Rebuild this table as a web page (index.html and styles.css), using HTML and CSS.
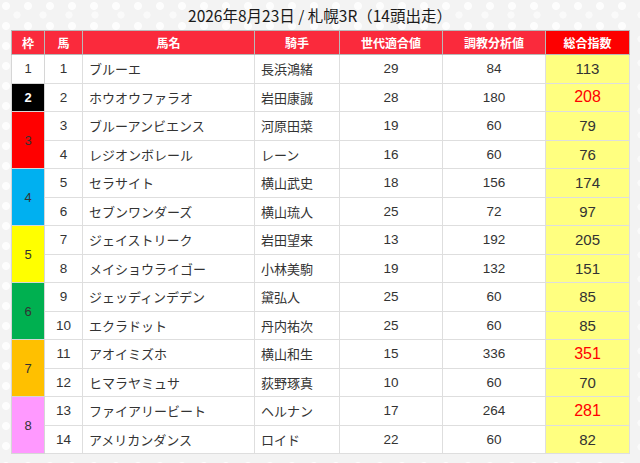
FILE: index.html
```html
<!DOCTYPE html>
<html lang="ja">
<head>
<meta charset="utf-8">
<link rel="stylesheet" href="styles.css">
</head>
<body>
<div class="page">
  <h1 class="title">2026年8月23日 / 札幌3R（14頭出走）</h1>
  <table class="race">
    <colgroup>
      <col class="c-waku"><col class="c-uma"><col class="c-name"><col class="c-jockey"><col class="c-gen"><col class="c-train"><col class="c-total">
    </colgroup>
    <thead>
      <tr><th>枠</th><th>馬</th><th>馬名</th><th>騎手</th><th>世代適合値</th><th>調教分析値</th><th class="th-total">総合指数</th></tr>
    </thead>
    <tbody>
      <tr><td class="waku w1">1</td><td class="num">1</td><td class="txt">ブルーエ</td><td class="txt">長浜鴻緒</td><td class="num">29</td><td class="num">84</td><td class="total">113</td></tr>
      <tr><td class="waku w2">2</td><td class="num">2</td><td class="txt">ホウオウファラオ</td><td class="txt">岩田康誠</td><td class="num">28</td><td class="num">180</td><td class="total hi">208</td></tr>
      <tr><td class="waku w3" rowspan="2">3</td><td class="num">3</td><td class="txt">ブルーアンビエンス</td><td class="txt">河原田菜</td><td class="num">19</td><td class="num">60</td><td class="total">79</td></tr>
      <tr><td class="num">4</td><td class="txt">レジオンボレール</td><td class="txt">レーン</td><td class="num">16</td><td class="num">60</td><td class="total">76</td></tr>
      <tr><td class="waku w4" rowspan="2">4</td><td class="num">5</td><td class="txt">セラサイト</td><td class="txt">横山武史</td><td class="num">18</td><td class="num">156</td><td class="total">174</td></tr>
      <tr><td class="num">6</td><td class="txt">セブンワンダーズ</td><td class="txt">横山琉人</td><td class="num">25</td><td class="num">72</td><td class="total">97</td></tr>
      <tr><td class="waku w5" rowspan="2">5</td><td class="num">7</td><td class="txt">ジェイストリーク</td><td class="txt">岩田望来</td><td class="num">13</td><td class="num">192</td><td class="total">205</td></tr>
      <tr><td class="num">8</td><td class="txt">メイショウライゴー</td><td class="txt">小林美駒</td><td class="num">19</td><td class="num">132</td><td class="total">151</td></tr>
      <tr><td class="waku w6" rowspan="2">6</td><td class="num">9</td><td class="txt">ジェッディンデデン</td><td class="txt">黛弘人</td><td class="num">25</td><td class="num">60</td><td class="total">85</td></tr>
      <tr><td class="num">10</td><td class="txt">エクラドット</td><td class="txt">丹内祐次</td><td class="num">25</td><td class="num">60</td><td class="total">85</td></tr>
      <tr><td class="waku w7" rowspan="2">7</td><td class="num">11</td><td class="txt">アオイミズホ</td><td class="txt">横山和生</td><td class="num">15</td><td class="num">336</td><td class="total hi">351</td></tr>
      <tr><td class="num">12</td><td class="txt">ヒマラヤミュサ</td><td class="txt">荻野琢真</td><td class="num">10</td><td class="num">60</td><td class="total">70</td></tr>
      <tr><td class="waku w8" rowspan="2">8</td><td class="num">13</td><td class="txt">ファイアリービート</td><td class="txt">ヘルナン</td><td class="num">17</td><td class="num">264</td><td class="total hi">281</td></tr>
      <tr><td class="num">14</td><td class="txt">アメリカンダンス</td><td class="txt">ロイド</td><td class="num">22</td><td class="num">60</td><td class="total">82</td></tr>
    </tbody>
  </table>
</div>
</body>
</html>
```
FILE: styles.css
```css
html, body {
  margin: 0;
  padding: 0;
}
body {
  width: 640px;
  height: 463px;
  overflow: hidden;
  background-color: #f3f3f3;
  background-image:
    radial-gradient(circle at 6px 6px, #fdfdfd 3.5px, transparent 4.5px),
    radial-gradient(circle at 17px 15px, #fafafa 3px, transparent 4px);
  background-size: 22px 20px, 26px 24px;
  font-family: "Noto Sans CJK JP", "Noto Sans", sans-serif;
  color: #333;
}
.page {
  padding: 5px 11px 0 11px;
}
.title {
  margin: 0;
  height: 25px;
  line-height: 20px;
  text-align: center;
  font-size: 15.5px;
  font-weight: normal;
  color: #1a1a1a;
}
.race {
  width: 618px;
  border-collapse: collapse;
  table-layout: fixed;
  background: #fff;
  border: 1px solid #d6d6d6;
}
.c-waku { width: 33px; }
.c-uma { width: 38px; }
.c-name { width: 172px; }
.c-jockey { width: 85px; }
.c-gen { width: 103px; }
.c-train { width: 103px; }
.c-total { width: 84px; }
.race th {
  height: 23px;
  padding: 0;
  background: #fa2a3c;
  color: #fff;
  font-size: 12px;
  font-weight: bold;
  text-align: center;
  border: 1px solid #b8b8b8;
  line-height: 1;
}
.race th.th-total {
  background: #fd0000;
}
.race td {
  height: 27.5px;
  padding: 0;
  border: 1px solid #dedede;
  font-size: 13px;
  line-height: 1;
  color: #333;
}
.race td.num,
.race td.waku,
.race td.total {
  font-family: "Liberation Sans", "Noto Sans", sans-serif;
}
.race td.num {
  text-align: center;
  font-size: 13.5px;
}
.race td.txt {
  text-align: left;
  padding-left: 6px;
  white-space: nowrap;
}
.race td.waku {
  text-align: center;
  border: 1px solid #d6d6d6;
}
.w1 { background: #fff; }
.w2 { background: #000; color: #fff !important; font-weight: bold; }
.w3 { background: #ff0000; }
.w4 { background: #00b0f0; }
.w5 { background: #ffff00; }
.w6 { background: #00b050; }
.w7 { background: #ffc000; }
.w8 { background: #ff99ff; }
.race td.total {
  background: #ffff80;
  text-align: center;
  font-size: 15px;
  font-weight: normal;
  color: #333;
}
.race td.total.hi {
  color: #ff0000;
  font-size: 16px;
}
```
